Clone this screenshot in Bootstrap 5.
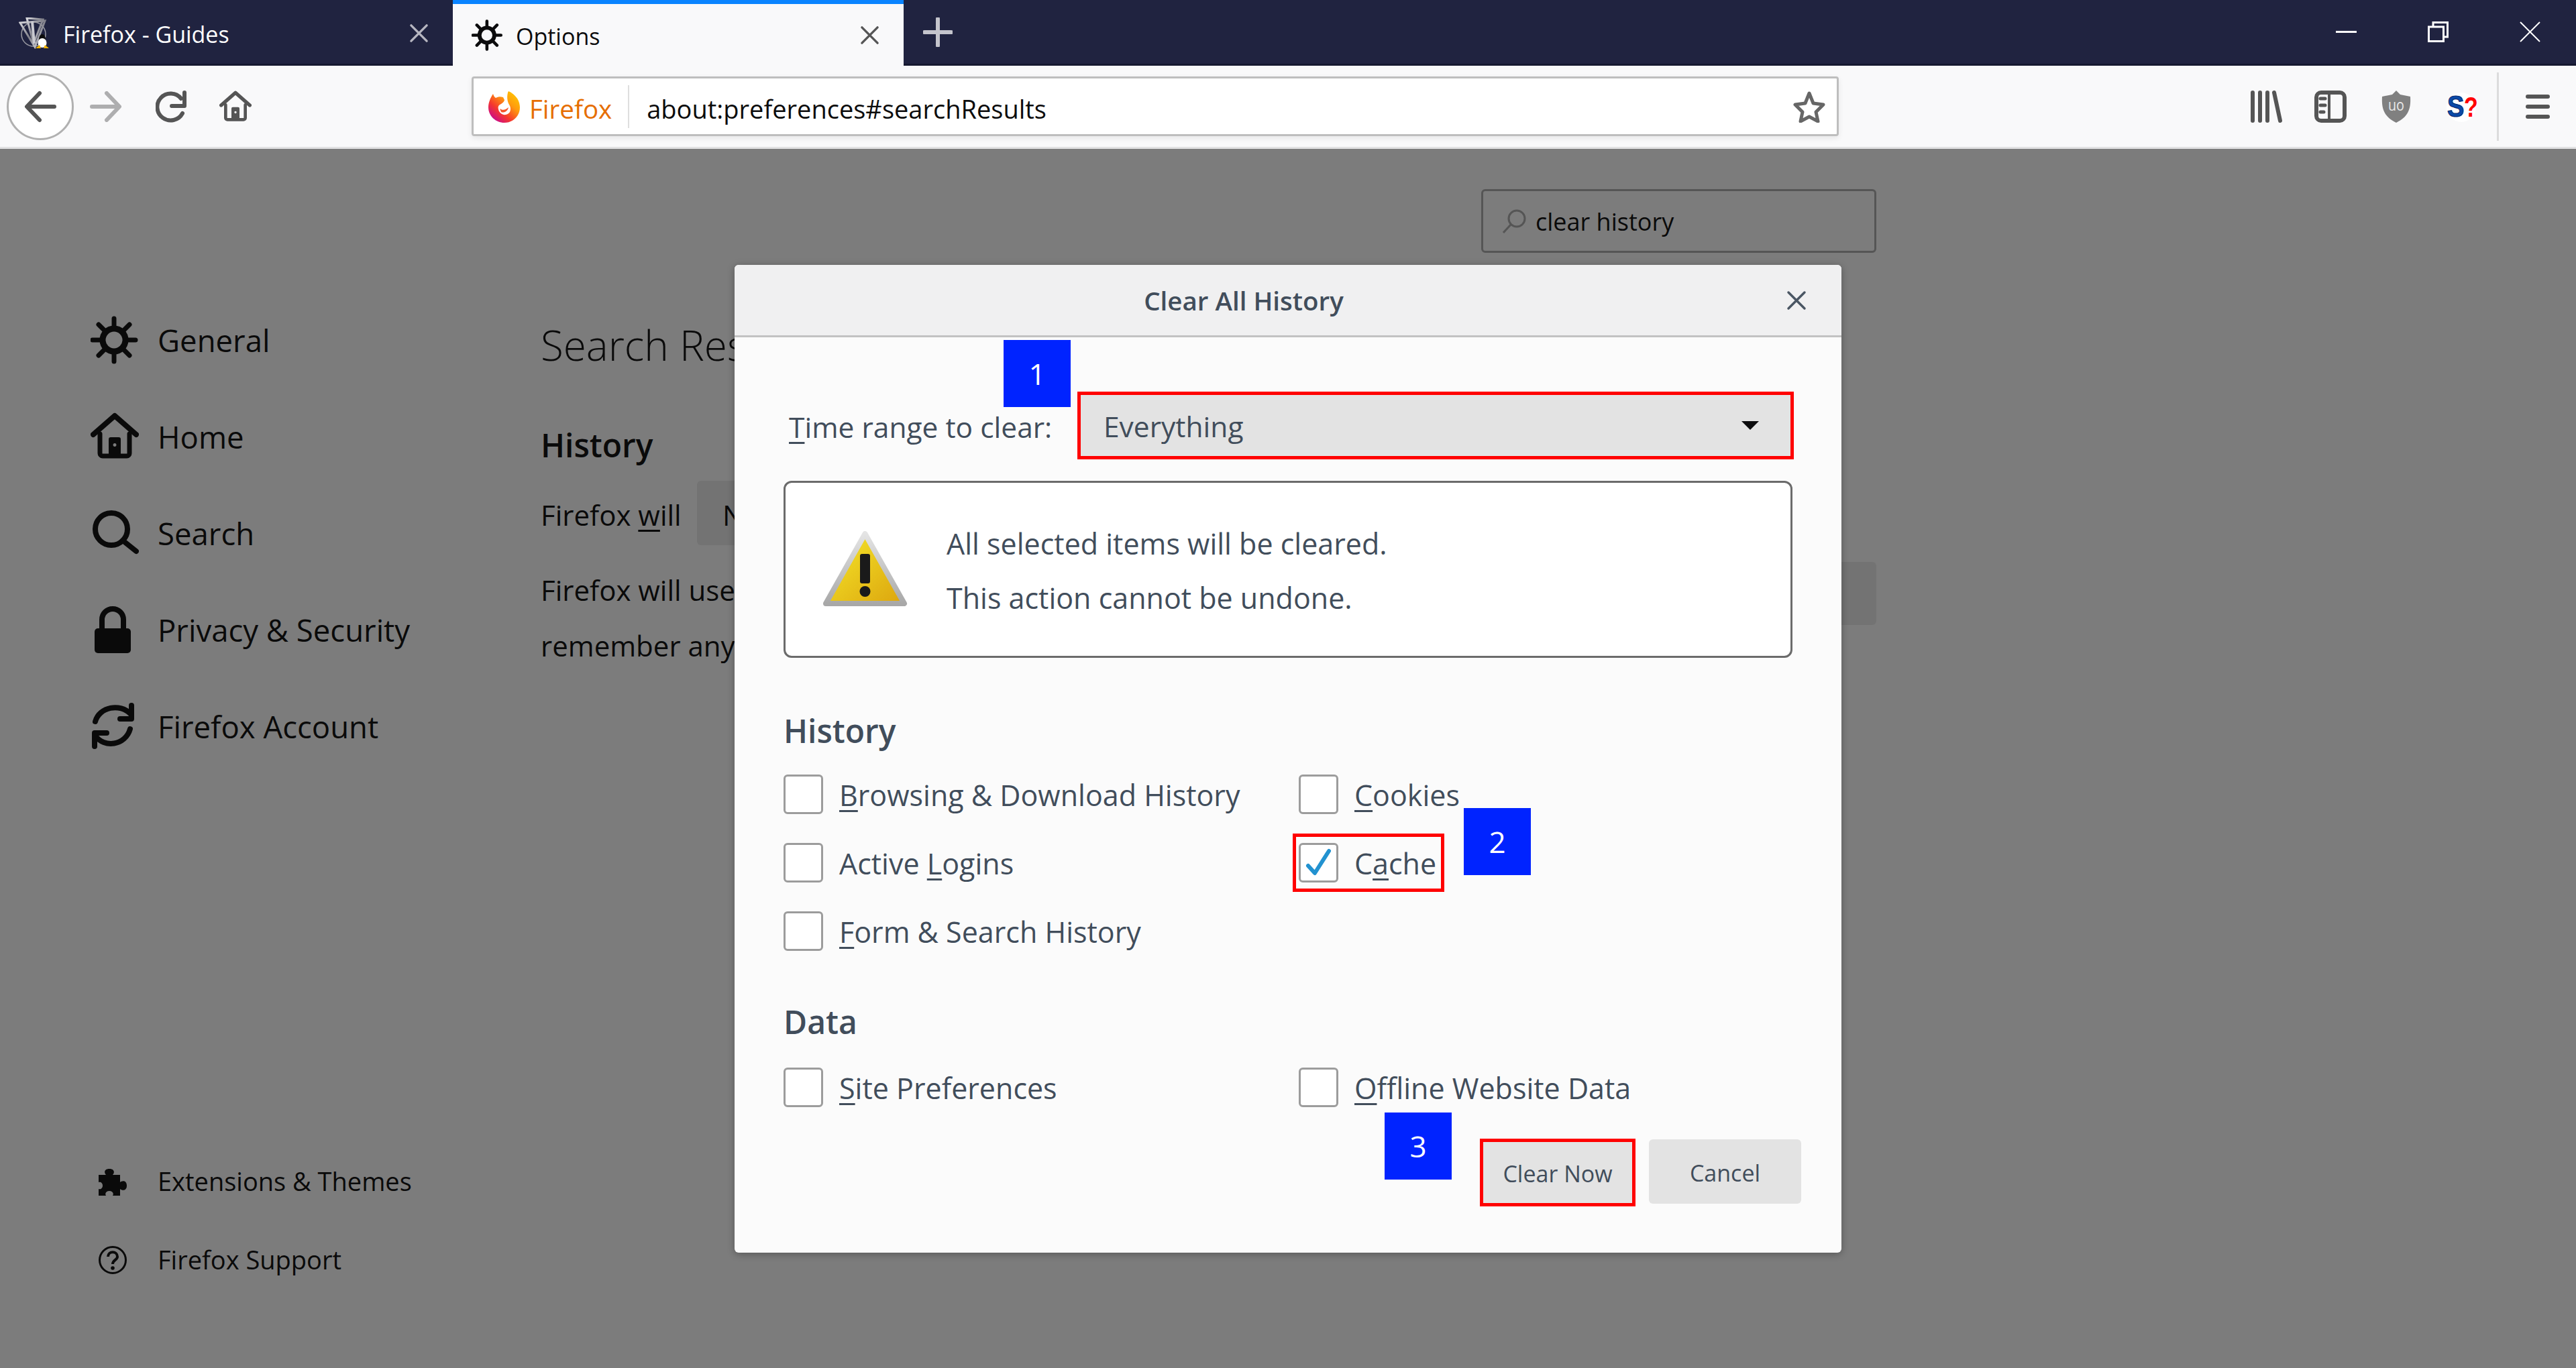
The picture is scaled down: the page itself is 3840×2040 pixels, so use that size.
<!DOCTYPE html>
<html lang="en">
<head>
<meta charset="UTF-8">
<title>Options</title>
<link href="https://cdn.jsdelivr.net/npm/bootstrap@5.3.3/dist/css/bootstrap.min.css" rel="stylesheet">
<style>
    html, body { height: 100%; }
    body { font-family: "Open Sans", "Liberation Sans", sans-serif; background: #7c7c7c; color: #0a0a0a; overflow: hidden; }
    .ff-window { width: 3840px; height: 2040px; }

    /* tab strip */
    .tab-strip { height: 98px; background: #202340; border-bottom: 3px solid #161930; color: #fff; }
    .ff-tab { width: 675px; height: 98px; padding-left: 28px; padding-right: 36px; font-size: 34px; }
    .ff-tab span { padding-top: 4px; }
    .ff-tab-active { width: 672px; background: #f9f9fa; border-top: 6px solid #0a84ff; color: #0c0c0d; }
    .ff-tab-active .tab-x { color: #555; }
    .tab-icon { width: 47px; height: 47px; margin-right: 19px; flex: none; }
    .tab-x { width: 29px; height: 29px; margin-left: auto; color: #b6b6c0; }
    .new-tab { width: 44px; height: 44px; margin-left: 29px; color: #c4c4cc; }
    .win-btns { margin-left: auto; padding-right: 53px; color: #fff; }
    .win-btn { width: 31px; height: 31px; margin-left: 106px; }

    /* toolbar */
    .nav-bar { height: 124px; background: #f9f9fa; border-bottom: 3px solid #e1e1e2; padding-left: 10px; }
    .back-btn { width: 100px; height: 100px; border: 3px solid #b1b1b1; border-radius: 50%; background: #fff; color: #555; }
    .tb-icon { width: 48px; height: 48px; color: #555; flex: none; }
    .url-bar { width: 2038px; height: 89px; margin-left: 328px; background: #fff; border: 3px solid #bebebe; border-radius: 4px; box-shadow: 0 3px 8px rgba(0,0,0,.08); font-size: 38px; color: #0c0c0d; padding-left: 22px; padding-right: 17px; }
    .url-bar span { padding-top: 8px; }
    .url-brand { color: #e66e00; margin-left: 14px; font-size: 38.500px; }
    .url-sep { width: 2px; height: 64px; background: #dedede; margin: 0 26px 0 24px; }
    .gap-fwd { margin-left: 24px; opacity: .45; }
    .gap-reload { margin-left: 50px; }
    .gap-home { margin-left: 47px; }
    .gap-lib { margin-left: 614px; }
    .gap-side { margin-left: 47px; }
    .gap-shield { margin-left: 50px; }
    .gap-sos { margin-left: 50px; }
    .tb-sep { width: 3px; height: 102px; background: #dcdcdc; margin-left: 28px; margin-right: 40px; }
    .burger { width: 36px; height: 36px; color: #555; }

    /* preferences page behind the dialog */
    .page-main { height: 1818px; }
    .pref-side { width: 806px; padding-left: 135px; padding-top: 213px; padding-bottom: 103px; }
    .side-item { height: 144px; font-size: 45.500px; }
    .side-icon { width: 100px; flex: none; }
    .side-icon svg { width: 72px; height: 72px; display: block; }
    .side-sub { height: 117px; font-size: 38px; }
    .side-sub svg { width: 42px; height: 42px; margin-left: 12px; display: block; }
    .pref-body { width: 1991px; padding-top: 60px; }
    .find-box { width: 589px; height: 95px; border: 3px solid #555; border-radius: 6px; padding-left: 28px; font-size: 36px; margin-left: auto; }
    .find-box span { padding-top: 3px; }
    .find-box svg { width: 36px; height: 36px; margin-right: 14px; color: #555; }
    .pref-title { font-size: 62px; font-weight: 300; line-height: 90px; margin: 92px 0 0; }
    .pref-h { font-size: 48px; font-weight: 600; line-height: 60px; margin: 75px 0 0; }
    .pref-line { font-size: 42px; line-height: 83px; }
    .pref-row { height: 96px; margin-top: 23px; }
    .will-label { width: 233px; padding-top: 4px; }
    .pref-select { width: 400px; height: 96px; background: #737373; border-radius: 6px; padding-left: 38px; padding-top: 4px; }
    .pref-rows { margin-top: 25px; }
    .pref-btn { width: 300px; height: 94px; background: #737373; border-radius: 6px; }

    /* dialog */
    .clear-dlg { position: absolute; left: 1095px; top: 395px; width: 1650px; height: 1473px; background: #fbfbfb; border-radius: 6px; box-shadow: 0 2px 12px rgba(0,0,0,.3); color: #414d5b; font-size: 43px; }
    .dlg-head { height: 108px; background: #f0f0f1; border-bottom: 3px solid #c2c2c2; border-radius: 6px 6px 0 0; }
    .dlg-title { width: 1518px; text-align: center; font-size: 38.500px; font-weight: 600; padding-top: 3px; }
    .dlg-x { width: 30px; height: 30px; margin-left: 50px; color: #4a5663; }
    .dlg-body { padding: 81px 73px 0; }
    .range-label { width: 438px; flex: none; padding-left: 8px; padding-top: 5px; font-size: 42.500px; }
    .range-select { width: 1068px; height: 101px; flex: none; border: 5px solid #f00; border-radius: 0; background-color: #e3e3e3; color: #414d5b; font-size: 42.500px; padding: 3px 0 0 34px; background-size: 26px 13px; background-position: right 47px center; background-image: url("data:image/svg+xml,%3Csvg xmlns='http://www.w3.org/2000/svg' viewBox='0 0 26 13'%3E%3Cpath d='M0 0h26L13 13z' fill='%230c0c0d'/%3E%3C/svg%3E"); }
    .warn-box { height: 264px; margin-top: 32px; border: 3px solid #6b6b6b; border-radius: 12px; background: #fff; padding-left: 55px; line-height: 81px; }
    .warn-box svg { width: 127px; height: 115px; margin-right: 58px; flex: none; }
    .warn-text { padding-top: 4px; }
    .dlg-h { font-size: 48px; font-weight: 600; line-height: 56px; }
    .h-history { margin: 81px 0 15px; }
    .h-data { margin: 57px 0 18px; }
    .opt-grid { display: grid; grid-template-columns: 768px 1fr; grid-auto-rows: 102px; align-items: center; }
    .opt-item { display: flex; align-items: center; }
    .opt-item span { padding-top: 4px; }
    .ff-check.form-check-input { width: 59px; height: 59px; margin: 0 24px 0 0; border: 3px solid #9c9c9c; border-radius: 6px; background-color: #fff; flex: none; }
    .ff-check.form-check-input:checked { background-color: #fff; border-color: #9c9c9c; background-size: 40px 42px; background-image: url("data:image/svg+xml,%3Csvg xmlns='http://www.w3.org/2000/svg' viewBox='0 0 40 42'%3E%3Cpath d='M4 26l10 11L35 4' fill='none' stroke='%232292d0' stroke-width='6' stroke-linecap='round' stroke-linejoin='round'/%3E%3C/svg%3E"); }
    .mark-box { outline: 5px solid #f00; width: 216px; height: 77px; margin-left: -4px; padding-left: 4px; }
    u { text-decoration-thickness: 3px; text-underline-offset: 6px; }
    .dlg-foot { margin-top: 26px; margin-right: -13px; gap: 20px; }
    .dlg-btn { height: 96px; background: #e3e3e3; border: 0; border-radius: 6px; color: #414d5b; font-size: 34px; padding: 4px 0 0; margin-top: 1px; }
    .btn-clear { width: 232px; height: 101px; border: 5px solid #f00; border-radius: 0; margin-top: 0; }
    .btn-cancel { width: 227px; }

    /* numbered callouts on top of the screenshot */
    .callout { position: absolute; width: 100px; height: 100px; background: #0023ff; color: #fff; font-size: 44px; }
    .co-1 { left: 1496px; top: 507px; }
    .co-2 { left: 2182px; top: 1205px; }
    .co-3 { left: 2064px; top: 1659px; }
</style>
</head>
<body>

<svg width="0" height="0" class="position-absolute">
    <symbol id="i-gear" viewBox="0 0 72 72"><g fill="none" stroke="currentColor"><circle cx="35" cy="36" r="17" stroke-width="9"/><path stroke-width="7" stroke-linecap="round" d="M35 4v12M35 56v12M3 36h12M55 36h12M12 13l9 9M58 13l-9 9M12 59l9-9M58 59l-9-9"/></g></symbol>
    <symbol id="i-home" viewBox="0 0 72 72"><g fill="none" stroke="currentColor" stroke-linecap="round" stroke-linejoin="round"><path stroke-width="8" d="M4 33L36 5l32 28"/><path stroke-width="7" d="M14 32v29a4 4 0 0 0 4 4h36a4 4 0 0 0 4-4V32"/></g><path fill="currentColor" fill-rule="evenodd" d="M27 40a3 3 0 0 1 3-3h12a3 3 0 0 1 3 3v26H27zM36 46a2.500 2.500 0 1 0 .01 0z"/></symbol>
    <symbol id="i-search" viewBox="0 0 72 72"><circle cx="31" cy="30" r="24" fill="none" stroke="currentColor" stroke-width="8"/><path d="M48 47l20 16" stroke="currentColor" stroke-width="8" stroke-linecap="round"/></symbol>
    <symbol id="i-lock" viewBox="0 0 72 72"><rect x="6" y="34" width="54" height="37" rx="5" fill="currentColor"/><path d="M17 36V21a16 16 0 0 1 32 0v15" fill="none" stroke="currentColor" stroke-width="8"/></symbol>
    <symbol id="i-sync" viewBox="0 0 72 72"><g fill="none" stroke="currentColor" stroke-width="8" stroke-linecap="round" stroke-linejoin="round"><path d="M7 29C13 7 44 1 60 18"/><path d="M61 5v20H44"/><path d="M59 40C52 65 20 69 7 50"/><path d="M6 66V46h18"/></g></symbol>
    <symbol id="i-x" viewBox="0 0 30 30"><path d="M3 3l24 24M27 3L3 27" stroke="currentColor" stroke-width="3.500" stroke-linecap="round"/></symbol>
</svg>

<div class="ff-window d-flex flex-column position-relative">

    <!-- tabs -->
    <div class="tab-strip d-flex align-items-start flex-shrink-0">
        <div class="ff-tab d-flex align-items-center">
            <svg class="tab-icon" viewBox="0 0 47 47">
                <defs>
                    <linearGradient id="fav-a" x1="0" y1="0" x2="1" y2="1"><stop offset="0" stop-color="#d9d9de"/><stop offset=".5" stop-color="#7f7f88"/><stop offset="1" stop-color="#e6e6ea"/></linearGradient>
                </defs>
                <circle cx="22" cy="25" r="18" fill="none" stroke="#9a9aa2" stroke-width="1.500"/>
                <path d="M2 8L39 5 24 44z" fill="none" stroke="url(#fav-a)" stroke-width="3"/>
                <path d="M12 1l10 38 14-36z" fill="none" stroke="url(#fav-a)" stroke-width="3"/>
                <path d="M20 6l3 33" stroke="#c9c9cf" stroke-width="4"/>
                <ellipse cx="35" cy="33" rx="5" ry="8" fill="#0c0c0c"/>
                <ellipse cx="35" cy="38" rx="6.500" ry="7" fill="#fff"/>
                <path d="M25 46l6-5 2 5zM45 46l-6-5-2 5z" fill="#f2b500"/>
            </svg>
            <span>Firefox - Guides</span>
            <svg class="tab-x"><use href="#i-x"/></svg>
        </div>
        <div class="ff-tab ff-tab-active d-flex align-items-center">
            <svg class="tab-icon"><use href="#i-gear"/></svg>
            <span>Options</span>
            <svg class="tab-x"><use href="#i-x"/></svg>
        </div>
        <svg class="new-tab align-self-center" viewBox="0 0 44 44"><path d="M22 2v40M2 22h40" stroke="currentColor" stroke-width="6" stroke-linecap="round"/></svg>
        <div class="win-btns d-flex align-items-center align-self-center">
            <svg class="win-btn" viewBox="0 0 31 31"><path d="M0 15.500h31" stroke="currentColor" stroke-width="3"/></svg>
            <svg class="win-btn" viewBox="0 0 31 31"><path d="M1.500 8h22v21.500h-22zM8 8V1.500h21.500V23H23.500" fill="none" stroke="currentColor" stroke-width="3"/></svg>
            <svg class="win-btn" viewBox="0 0 31 31"><path d="M1 1l29 29M30 1L1 30" stroke="currentColor" stroke-width="2"/></svg>
        </div>
    </div>

    <!-- toolbar -->
    <div class="nav-bar d-flex align-items-center flex-shrink-0">
        <div class="back-btn d-flex align-items-center justify-content-center">
            <svg class="tb-icon" viewBox="0 0 48 48"><path d="M45 24H5M23 4L4 24l19 20" fill="none" stroke="currentColor" stroke-width="6" stroke-linecap="round" stroke-linejoin="round"/></svg>
        </div>
        <svg class="tb-icon gap-fwd" viewBox="0 0 48 48"><path d="M3 24h40M25 4l19 20-19 20" fill="none" stroke="currentColor" stroke-width="6" stroke-linecap="round" stroke-linejoin="round"/></svg>
        <svg class="tb-icon gap-reload" viewBox="0 0 48 48"><path d="M40 34A20 20 0 1 1 38 12" fill="none" stroke="currentColor" stroke-width="6" stroke-linecap="round"/><path d="M43 3v20H24" fill="none" stroke="currentColor" stroke-width="6" stroke-linecap="round" stroke-linejoin="round"/></svg>
        <svg class="tb-icon gap-home"><use href="#i-home"/></svg>

        <div class="url-bar d-flex align-items-center">
            <svg width="47" height="48" viewBox="0 0 47 48" class="flex-shrink-0">
                <defs>
                    <linearGradient id="fx-a" x1="1" y1="0" x2="0.150" y2="0.950"><stop offset="0" stop-color="#ffd400"/><stop offset=".4" stop-color="#ff9a0e"/><stop offset=".7" stop-color="#f5382e"/><stop offset=".92" stop-color="#d3137a"/><stop offset="1" stop-color="#8a2bb0"/></linearGradient>
                </defs>
                <path d="M30 1C41 6 47 15 47 25C47 38 37 48 24 48C11 48 0 38 0 25C0 18 3 11 7 5C8 8 9 10 11 11C15 9 18 9 22 10z" fill="url(#fx-a)"/>
                <path d="M22 0h8C27 8 28 16 31 21C35 27 33 35 26 36C21 37 16 33 15 28C14 24 15 22 19 20C22 18 24 16 24 14L22 10z" fill="#fff"/>
                <path d="M17 27C21 30 26 29 30 25C29 31 23 34 19 32z" fill="#f5562a"/>
            </svg>
            <span class="url-brand">Firefox</span>
            <div class="url-sep"></div>
            <span>about:preferences#searchResults</span>
            <svg class="tb-icon ms-auto" viewBox="0 0 48 48"><path d="M24 4l6 15 15 2-11 11 3 14-13-7-13 7 3-14L3 21l15-2z" fill="none" stroke="#666" stroke-width="5" stroke-linejoin="round"/></svg>
        </div>

        <svg class="tb-icon gap-lib" viewBox="0 0 48 48"><path d="M3 3v42M14 3v42M25 3v42M35 3l9 42" fill="none" stroke="currentColor" stroke-width="6" stroke-linecap="round"/></svg>
        <svg class="tb-icon gap-side" viewBox="0 0 48 48"><rect x="3" y="3" width="42" height="42" rx="7" fill="none" stroke="currentColor" stroke-width="6"/><path d="M22 4v40" stroke="currentColor" stroke-width="4"/><path d="M9 12h7M9 22h7M9 32h5" stroke="currentColor" stroke-width="5" stroke-linecap="round"/></svg>
        <svg class="tb-icon gap-shield" viewBox="0 0 44 48"><path d="M22 0l6 6 15 3c1 17-2 30-21 39C3 39 0 26 1 9l15-3z" fill="#808080"/><text x="22" y="30" text-anchor="middle" fill="#e8e8e8" font-size="24" font-family="'Open Sans', sans-serif" textLength="24" lengthAdjust="spacingAndGlyphs">uo</text></svg>
        <svg class="tb-icon gap-sos" viewBox="0 0 48 48">
            <ellipse cx="23" cy="25" rx="22" ry="22" fill="#fff"/>
            <text transform="translate(2 38.500) scale(1 1.150)" fill="#0a4aa8" stroke="#062a70" stroke-width="1" font-size="38" font-weight="700" font-family="'Liberation Sans', sans-serif">S</text>
            <text transform="translate(27 39) scale(1 1.250)" fill="#f00" font-size="34" font-weight="700" font-family="'Liberation Sans', sans-serif">?</text>
        </svg>
        <div class="tb-sep"></div>
        <svg class="burger" viewBox="0 0 36 36"><path d="M3 3h30M3 18h30M3 33h30" stroke="currentColor" stroke-width="6" stroke-linecap="round"/></svg>
    </div>

    <!-- preferences page, dimmed -->
    <div class="page-main d-flex flex-grow-1">
        <div class="pref-side d-flex flex-column">
            <div class="side-item d-flex align-items-center"><div class="side-icon"><svg><use href="#i-gear"/></svg></div>General</div>
            <div class="side-item d-flex align-items-center"><div class="side-icon"><svg><use href="#i-home"/></svg></div>Home</div>
            <div class="side-item d-flex align-items-center"><div class="side-icon"><svg><use href="#i-search"/></svg></div>Search</div>
            <div class="side-item d-flex align-items-center"><div class="side-icon"><svg><use href="#i-lock"/></svg></div>Privacy &amp; Security</div>
            <div class="side-item d-flex align-items-center"><div class="side-icon"><svg><use href="#i-sync"/></svg></div>Firefox Account</div>
            <div class="side-sub d-flex align-items-center mt-auto"><div class="side-icon">
                <svg viewBox="0 0 42 42"><path d="M0 11h11c-3-3-3-9 5-9s8 6 5 9h11v11c3-3 10-3 10 5s-7 8-10 5v10H21c2-3 0-7-5-7s-7 4-5 7H0V32c3 1 6-1 6-5s-3-6-6-5z" fill="currentColor"/></svg>
            </div>Extensions &amp; Themes</div>
            <div class="side-sub d-flex align-items-center"><div class="side-icon">
                <svg viewBox="0 0 42 42"><circle cx="21" cy="21" r="19.500" fill="none" stroke="currentColor" stroke-width="3"/><path d="M14 16c0-9 14-9 14 0 0 5-7 5-7 11" fill="none" stroke="currentColor" stroke-width="4"/><circle cx="21" cy="33" r="2.800" fill="currentColor"/></svg>
            </div>Firefox Support</div>
        </div>
        <div class="pref-body">
            <div class="find-box d-flex align-items-center">
                <svg viewBox="0 0 36 36"><circle cx="22" cy="14" r="12" fill="none" stroke="currentColor" stroke-width="3"/><path d="M13 23L2 35" stroke="currentColor" stroke-width="3"/></svg>
                <span>clear history</span>
            </div>
            <h1 class="pref-title">Search Results</h1>
            <h2 class="pref-h">History</h2>
            <div class="pref-row pref-line d-flex align-items-center">
                <span class="will-label">Firefox <u>w</u>ill</span>
                <div class="pref-select d-flex align-items-center">Never</div>
            </div>
            <div class="pref-rows d-flex justify-content-between align-items-start">
                <div class="pref-line">Firefox will use<br>remember any</div>
                <div class="pref-btn"></div>
            </div>
        </div>
    </div>

    <!-- clear history dialog -->
    <div class="clear-dlg">
        <div class="dlg-head d-flex align-items-center">
            <div class="dlg-title">Clear All History</div>
            <svg class="dlg-x"><use href="#i-x"/></svg>
        </div>
        <div class="dlg-body">
            <div class="d-flex align-items-center">
                <div class="range-label text-nowrap"><u>T</u>ime range to clear:</div>
                <select class="form-select range-select"><option>Everything</option></select>
            </div>
            <div class="warn-box d-flex align-items-center">
                <svg viewBox="0 0 127 115">
                    <defs>
                        <linearGradient id="w-a" x1="0" y1="0" x2="1" y2="1"><stop offset="0" stop-color="#f6ea2a"/><stop offset="1" stop-color="#dca40e"/></linearGradient>
                        <linearGradient id="w-b" x1="0" y1="0" x2="0" y2="1"><stop offset="0" stop-color="#e4e4e4"/><stop offset="1" stop-color="#a8a8a8"/></linearGradient>
                    </defs>
                    <path d="M63.500 4L122 108H5z" fill="url(#w-a)" stroke="url(#w-b)" stroke-width="8" stroke-linejoin="round"/>
                    <rect x="56" y="34" width="15" height="44" rx="3" fill="#1a1a1a"/>
                    <circle cx="63.500" cy="90" r="8" fill="#1a1a1a"/>
                </svg>
                <div class="warn-text">All selected items will be cleared.<br>This action cannot be undone.</div>
            </div>

            <div class="dlg-h h-history">History</div>
            <div class="opt-grid">
                <label class="opt-item"><input class="form-check-input ff-check" type="checkbox"><span><u>B</u>rowsing &amp; Download History</span></label>
                <label class="opt-item"><input class="form-check-input ff-check" type="checkbox"><span><u>C</u>ookies</span></label>
                <label class="opt-item"><input class="form-check-input ff-check" type="checkbox"><span>Active <u>L</u>ogins</span></label>
                <label class="opt-item mark-box"><input class="form-check-input ff-check" type="checkbox" checked><span>C<u>a</u>che</span></label>
                <label class="opt-item"><input class="form-check-input ff-check" type="checkbox"><span><u>F</u>orm &amp; Search History</span></label>
            </div>

            <div class="dlg-h h-data">Data</div>
            <div class="opt-grid">
                <label class="opt-item"><input class="form-check-input ff-check" type="checkbox"><span><u>S</u>ite Preferences</span></label>
                <label class="opt-item"><input class="form-check-input ff-check" type="checkbox"><span><u>O</u>ffline Website Data</span></label>
            </div>

            <div class="dlg-foot d-flex justify-content-end align-items-start">
                <button type="button" class="btn dlg-btn btn-clear">Clear Now</button>
                <button type="button" class="btn dlg-btn btn-cancel">Cancel</button>
            </div>
        </div>
    </div>

    <div class="callout co-1 d-flex align-items-center justify-content-center">1</div>
    <div class="callout co-2 d-flex align-items-center justify-content-center">2</div>
    <div class="callout co-3 d-flex align-items-center justify-content-center">3</div>
</div>

<script src="https://cdn.jsdelivr.net/npm/bootstrap@5.3.3/dist/js/bootstrap.bundle.min.js"></script>
</body>
</html>
